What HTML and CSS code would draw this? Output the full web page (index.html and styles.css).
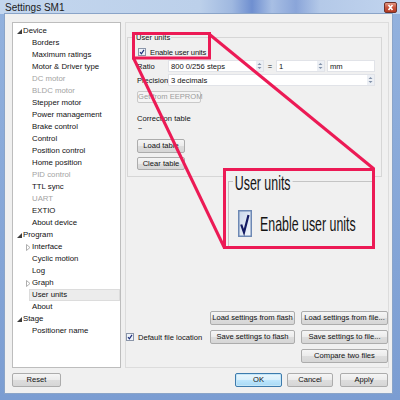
FILE: index.html
```html
<!DOCTYPE html>
<html>
<head>
<meta charset="utf-8">
<title>Settings SM1</title>
<link rel="stylesheet" href="styles.css">
</head>
<body>
<div class="window">
  <div class="titlebar">
    <span class="title">Settings SM1</span>
    <span class="close"><svg width="13" height="11" viewBox="0 0 13 11"><path d="M4.5 3 L8.5 8 M8.5 3 L4.5 8" stroke="#fff" stroke-width="1.6"/></svg></span>
  </div>
  <div class="client">
    <div class="main">
      <div class="tree">
        <div class="row r0"><svg class="exp" width="7" height="7" viewBox="0 0 7 7"><path d="M6 1 L6 6 L1 6Z" fill="#3c3c3c"/></svg>Device</div>
        <div class="row">Borders</div>
        <div class="row">Maximum ratings</div>
        <div class="row">Motor &amp; Driver type</div>
        <div class="row dis">DC motor</div>
        <div class="row dis">BLDC motor</div>
        <div class="row">Stepper motor</div>
        <div class="row">Power management</div>
        <div class="row">Brake control</div>
        <div class="row">Control</div>
        <div class="row">Position control</div>
        <div class="row">Home position</div>
        <div class="row dis">PID control</div>
        <div class="row">TTL sync</div>
        <div class="row dis">UART</div>
        <div class="row">EXTIO</div>
        <div class="row">About device</div>
        <div class="row r0"><svg class="exp" width="7" height="7" viewBox="0 0 7 7"><path d="M6 1 L6 6 L1 6Z" fill="#3c3c3c"/></svg>Program</div>
        <div class="row rc"><svg class="exp" width="7" height="7" viewBox="0 0 7 7"><path d="M1.5 0.5 L5 3.5 L1.5 6.5Z" fill="none" stroke="#a6a6a6" stroke-width="0.9"/></svg>Interface</div>
        <div class="row">Cyclic motion</div>
        <div class="row">Log</div>
        <div class="row rc"><svg class="exp" width="7" height="7" viewBox="0 0 7 7"><path d="M1.5 0.5 L5 3.5 L1.5 6.5Z" fill="none" stroke="#a6a6a6" stroke-width="0.9"/></svg>Graph</div>
        <div class="row sel">User units</div>
        <div class="row">About</div>
        <div class="row r0"><svg class="exp" width="7" height="7" viewBox="0 0 7 7"><path d="M6 1 L6 6 L1 6Z" fill="#3c3c3c"/></svg>Stage</div>
        <div class="row">Positioner name</div>
      </div>
      <div class="panel">
        <div class="group">
          <span class="legend">User units</span>
          <div class="check first">
            <span class="cb"><svg width="8" height="8" viewBox="0 0 8 8"><rect x="0.5" y="0.5" width="7" height="7" fill="#eef3fa" stroke="#8a95a8"/><path d="M2 4.2 L3.4 5.8 L6 1.8" fill="none" stroke="#1d2f7a" stroke-width="1.2"/></svg></span>
            <span class="tight">Enable user units</span>
          </div>
          <div class="field">
            <span class="lbl">Ratio</span>
            <span class="input w1">800 0/256 steps<svg class="spin" width="7" height="10" viewBox="0 0 7 10"><rect width="7" height="10" fill="#eceff4"/><path d="M1.5 4 L3.5 2 L5.5 4Z M1.5 6 L3.5 8 L5.5 6Z" fill="#8090a8"/></svg></span>
            <span class="eq">=</span>
            <span class="input w2">1<svg class="spin" width="7" height="10" viewBox="0 0 7 10"><rect width="7" height="10" fill="#eceff4"/><path d="M1.5 4 L3.5 2 L5.5 4Z M1.5 6 L3.5 8 L5.5 6Z" fill="#8090a8"/></svg></span>
            <span class="input w3">mm</span>
          </div>
          <div class="field">
            <span class="lbl">Precision</span>
            <span class="input wide">3 decimals<svg class="spin" width="7" height="10" viewBox="0 0 7 10"><rect width="7" height="10" fill="#eceff4"/><path d="M1.5 4 L3.5 2 L5.5 4Z M1.5 6 L3.5 8 L5.5 6Z" fill="#8090a8"/></svg></span>
          </div>
          <button class="btn eeprom" disabled>Get from EEPROM</button>
          <div class="sub">Correction table</div>
          <div class="dash">--</div>
          <button class="btn table load">Load table</button>
          <button class="btn table clear">Clear table</button>
        </div>
        <div class="files">
          <button class="btn c2">Load settings from flash</button>
          <button class="btn c3">Load settings from file...</button>
          <div class="check deflt">
            <span class="cb"><svg width="8" height="8" viewBox="0 0 8 8"><rect x="0.5" y="0.5" width="7" height="7" fill="#eef3fa" stroke="#8a95a8"/><path d="M2 4.2 L3.4 5.8 L6 1.8" fill="none" stroke="#1d2f7a" stroke-width="1.2"/></svg></span>
            <span>Default file location</span>
          </div>
          <button class="btn c2">Save settings to flash</button>
          <button class="btn c3">Save settings to file...</button>
          <button class="btn c3 r3">Compare two files</button>
        </div>
      </div>
    </div>
    <div class="footer">
      <button class="btn reset">Reset</button>
      <div class="actions">
        <button class="btn ok">OK</button>
        <button class="btn cancel">Cancel</button>
        <button class="btn apply">Apply</button>
      </div>
    </div>
  </div>

  <div class="callout">
    <div class="zgroup">
      <span class="zlegend">User units</span>
      <div class="zcheck">
        <svg width="14" height="27" viewBox="0 0 14 27"><defs><linearGradient id="zg" x1="0" y1="0" x2="1" y2="1"><stop offset="0" stop-color="#c9d7ea"/><stop offset="1" stop-color="#f4f7fc"/></linearGradient></defs><rect x="0.75" y="0.75" width="12.5" height="25.5" fill="url(#zg)" stroke="#6d88b4" stroke-width="1.5"/><path d="M3.2 14.5 L6 22.5 L10.5 5" fill="none" stroke="#141b63" stroke-width="2.2"/></svg>
        <span class="ztext">Enable user units</span>
      </div>
    </div>
  </div>

  <svg class="annot" width="400" height="400" viewBox="0 0 400 400">
    <rect x="133.5" y="33.5" width="76" height="24.5" fill="none" stroke="#ec1a55" stroke-width="3"/>
    <path d="M209 34 L374 169" stroke="#ec1a55" stroke-width="3"/>
    <path d="M133.5 58 L224.5 248" stroke="#ec1a55" stroke-width="3"/>
  </svg>
</div>
</body>
</html>
```

FILE: styles.css
```css
* { box-sizing: border-box; }
html, body { margin: 0; padding: 0; width: 400px; height: 400px; overflow: hidden; }
body {
  font-family: "Liberation Sans", Arial, sans-serif;
  font-size: 7.6px;
  color: #111;
}
.window {
  position: relative;
  width: 400px;
  height: 400px;
  display: flex;
  flex-direction: column;
  background: linear-gradient(to bottom, #93b2de 0%, #7b9dd2 100%);
}
.titlebar {
  height: 14px;
  display: flex;
  align-items: center;
  padding-left: 5px;
  background: linear-gradient(to right, #c3d6ee 0%, #bcd0ea 50%, #9fb8e0 58%, #6f8fd0 63%, #a8bfe4 68%, #8aa5d9 74%, #b4c9e8 80%, #c1d4ee 100%);
}
.title { font-family: "Liberation Sans", sans-serif; font-size: 10px; color: #1b1b1b; }
.close {
  margin-left: auto;
  margin-right: 3px;
  width: 13px;
  height: 11px;
  border-radius: 2px;
  border: 1px solid #6e3229;
  background: linear-gradient(#e39a86, #c9553d 50%, #b33a22);
  display: flex;
}
.close svg { margin: -1px; }
.client {
  flex: 1;
  margin: 0 8px 7px 5px;
  background: #f0f0f0;
  padding: 8px 3px 6px 7px;
  display: flex;
  flex-direction: column;
  gap: 5px;
  box-shadow: 0 0 0 1px #8aa4c8;
}
.main {
  flex: 1;
  display: grid;
  grid-template-columns: 109px 264px;
  column-gap: 4px;
}
.tree {
  background: #fff;
  border: 1px solid #bdbdbd;
  padding-top: 2px;
  font-size: 7.8px;
}
.row {
  height: 12px;
  line-height: 12px;
  white-space: nowrap;
  padding-left: 19px;
  display: flex;
  align-items: center;
}
.row.r0 { padding-left: 3px; }
.row.rc { padding-left: 12px; }
.row .exp { flex: none; width: 7px; height: 7px; }
.row.dis { color: #a3a3a3; }
.row.sel {
  margin-left: 16px;
  padding-left: 3px;
  background: #ececec;
  box-shadow: inset 0 0 0 1px #dcdcdc;
}
.panel {
  border: 1px solid #dcdcdc;
  display: flex;
  flex-direction: column;
  justify-content: space-between;
}
.group {
  margin: 14px 6px 0 1px;
  border: 1px solid #d6d6d6;
  padding: 0 0 6px 9px;
  display: flex;
  flex-direction: column;
  align-items: flex-start;
}
.legend {
  display: block;
  margin: -6px 0 0 -2px;
  padding: 0 1px;
  line-height: 12px;
  background: #f0f0f0;
}
.check {
  display: flex;
  align-items: center;
  height: 12px;
  white-space: nowrap;
}
.check.first { margin-top: 2px; margin-left: 1px; }
.tight { letter-spacing: -0.15px; }
.cb { width: 8px; height: 8px; margin-right: 4px; display: flex; }
.field {
  display: flex;
  align-items: center;
  height: 12px;
  margin-top: 2px;
}
.field + .field { margin-top: 2px; }
.lbl { width: 31px; white-space: nowrap; }
.input {
  height: 12px;
  background: #fff;
  border: 1px solid #e1e3e8;
  display: flex;
  align-items: center;
  padding-left: 2px;
  white-space: nowrap;
}
.input .spin { margin-left: auto; }
.w1 { width: 96px; }
.w2 { width: 49px; }
.w3 { width: 48px; margin-left: 2px; }
.wide { width: 207px; }
.eq { width: 12px; text-align: center; }
.btn {
  font-family: inherit;
  font-size: 7.6px;
  color: #111;
  margin: 0;
  padding: 0;
  height: 14px;
  line-height: 12px;
  border: 1px solid #acacac;
  border-radius: 2px;
  background: linear-gradient(#f5f5f5 0%, #ebebeb 50%, #dddddd 51%, #d6d6d6 100%);
  white-space: nowrap;
}
.eeprom {
  margin-top: 5px;
  width: 64px;
  height: 12px;
  line-height: 10px;
  color: #9c9c9c;
  border-color: #c9c9c9;
  background: #f4f4f4;
}
.sub { margin-top: 10px; line-height: 11px; white-space: nowrap; }
.dash { line-height: 7px; font-size: 7px; margin-left: 1px; letter-spacing: -0.5px; }
.table { width: 48px; }
.load { margin-top: 8px; }
.clear { margin-top: 4px; height: 13px; }
.files {
  display: grid;
  grid-template-columns: 1fr 85px 87px;
  grid-auto-rows: 14px;
  column-gap: 6px;
  row-gap: 5px;
  padding-bottom: 4px;
}
.c2 { grid-column: 2; }
.c3 { grid-column: 3; }
.deflt { grid-column: 1; height: 14px; }
.deflt .cb { margin-right: 4px; }
.r3 { grid-column: 3; }
.footer {
  height: 14px;
  display: flex;
  justify-content: space-between;
}
.reset { width: 49px; }
.actions { display: flex; margin-right: 1px; }
.ok {
  width: 47px;
  border-color: #3d7bad;
  background: linear-gradient(#eaf6fd 0%, #d9f0fc 50%, #bee6fd 51%, #a7d9f5 100%);
  box-shadow: inset 0 0 0 1px #c5e6f7;
}
.cancel { width: 46px; margin-left: 5px; }
.apply { width: 48px; margin-left: 7px; }

/* zoom callout (annotation overlay) */
.callout {
  position: absolute;
  left: 223px;
  top: 168px;
  width: 152px;
  height: 81px;
  border: 3px solid #ec1a55;
  background: #f0f0f0;
  overflow: hidden;
}
.zgroup {
  margin: 10px -20px 0 2px;
  height: 90px;
  border-top: 1px solid #c4c4c4;
  border-left: 1px solid #c4c4c4;
  font-family: "Liberation Sans", sans-serif;
}
.zlegend {
  display: block;
  width: max-content;
  margin: -10px 0 0 4px;
  padding: 0 3px;
  font-size: 21px;
  line-height: 21px;
  background: #f0f0f0;
  color: #141414;
  transform: scaleX(0.59);
  transform-origin: left center;
}
.zcheck {
  display: flex;
  align-items: center;
  margin: 17px 0 0 9px;
}
.zcheck svg { flex: none; }
.ztext {
  display: block;
  margin-left: 8px;
  font-size: 21px;
  line-height: 27px;
  white-space: nowrap;
  color: #141414;
  transform: scaleX(0.59);
  transform-origin: left center;
}
.annot {
  position: absolute;
  left: 0;
  top: 0;
  pointer-events: none;
}
```
